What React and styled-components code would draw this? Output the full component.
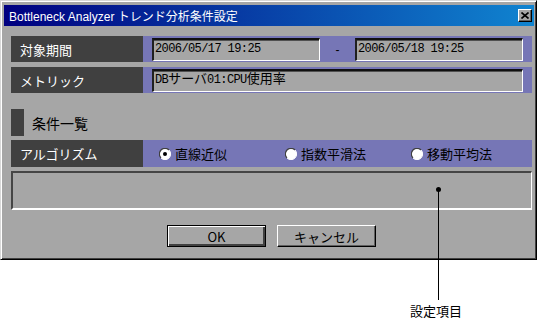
import React from 'react'
import styled, { createGlobalStyle } from 'styled-components'

const GlobalStyle = createGlobalStyle`
  body {
    margin: 0;
    background: #fff;
    font-family: "Noto Sans CJK JP", sans-serif;
  }
`

const FACE = '#a6a6a6'
const DARK = '#404040'
const PURPLE = '#7676b6'

const Page = styled.div`
  position: relative;
  width: 543px;
  height: 331px;
`

const Window = styled.div`
  width: 537px;
  height: 260px;
  box-sizing: border-box;
  background: ${FACE};
  border: 1px solid;
  border-color: #d8d8d8 #000 #000 #d8d8d8;
  box-shadow: inset 1px 1px #fff, inset -1px -1px ${DARK};
  padding: 4px 2px 0 3px;
  display: flex;
  flex-direction: column;
`

const TitleBar = styled.div`
  height: 21px;
  display: flex;
  align-items: center;
  justify-content: space-between;
  padding: 0 2px 0 5px;
  background: linear-gradient(to right, #000080, #1084d0);
  color: #fff;
  font: 12px "Liberation Sans", "Noto Sans CJK JP", sans-serif;
  white-space: nowrap;
`

const CloseButton = styled.div`
  width: 14px;
  height: 13px;
  box-sizing: border-box;
  background: ${FACE};
  border: 1px solid;
  border-color: #fff #000 #000 #fff;
  box-shadow: inset -1px -1px #606060;
  display: flex;
  align-items: center;
  justify-content: center;
`

const Content = styled.div`
  display: flex;
  flex-direction: column;
  padding: 10px 2px 0 7px;
`

const Row = styled.div`
  display: grid;
  grid-template-columns: 132px minmax(0, 1fr);
  height: ${p => p.$h || 26}px;
  margin-top: ${p => p.$mt || 0}px;
`

const Label = styled.div`
  background: ${DARK};
  color: #fff;
  font-size: 13px;
  display: flex;
  align-items: center;
  padding-left: 9px;
`

const Values = styled.div`
  background: ${PURPLE};
  display: flex;
  align-items: flex-start;
  padding: 2px 9px 0;
`

const Input = styled.div`
  flex: 1;
  height: 23px;
  box-sizing: border-box;
  background: ${FACE};
  border-style: solid;
  border-width: 2px 1px 1px 2px;
  border-color: #101010 #fff #fff #202020;
  box-shadow: inset 0 1px #505050;
  padding-left: 1px;
  font: 12px/19px "Liberation Mono", "Noto Sans CJK JP", monospace;
  letter-spacing: -0.6px;
  color: #000;
  white-space: nowrap;
  overflow: hidden;
`

const Wide = styled.span`
  font-family: "Noto Sans CJK JP", sans-serif;
  font-size: 13px;
  letter-spacing: 0;
  line-height: 1;
`

const Dash = styled.div`
  width: 35px;
  height: 23px;
  display: flex;
  align-items: center;
  justify-content: center;
  font: 12px "Liberation Sans", sans-serif;
`

const Section = styled.div`
  display: flex;
  align-items: center;
  gap: 8px;
  height: 27px;
  margin-top: 16px;
  font-size: 14px;
  color: #000;
`

const Marker = styled.div`
  width: 13px;
  height: 27px;
  background: ${DARK};
`

const Options = styled.div`
  background: ${PURPLE};
  display: flex;
  align-items: center;
  padding-left: 16px;
  overflow: hidden;
`

const Option = styled.div`
  flex: 0 0 126px;
  display: flex;
  align-items: center;
  gap: 4px;
  font-size: 13px;
  color: #000;
  white-space: nowrap;
`

const Box = styled.div`
  height: 39px;
  margin-top: 4px;
  box-sizing: border-box;
  border-style: solid;
  border-width: 2px 1px 2px 2px;
  border-color: #454545 #fff #fff #454545;
`

const ButtonRow = styled.div`
  display: flex;
  justify-content: center;
  gap: 11px;
  margin-top: 15px;
`

const Button = styled.div`
  width: 99px;
  height: 22px;
  box-sizing: border-box;
  background: ${FACE};
  display: flex;
  align-items: center;
  justify-content: center;
  font-size: 13px;
  color: #000;
  border: 1px solid;
  border-color: ${p => (p.$default ? '#000' : '#fff #000 #000 #fff')};
  box-shadow: ${p =>
    p.$default
      ? `inset 1px 1px #fff, inset -2px -2px ${DARK}`
      : 'inset -1px -1px #606060'};
`

const Dot = styled.div`
  position: absolute;
  left: 436px;
  top: 187px;
  width: 5px;
  height: 5px;
  border-radius: 50%;
  background: #000;
`

const Leader = styled.div`
  position: absolute;
  left: 438px;
  top: 189px;
  width: 1px;
  height: 111px;
  background: #000;
`

const Note = styled.div`
  position: absolute;
  left: 410px;
  top: 303px;
  font-size: 13px;
  line-height: 15px;
  color: #000;
`

function Radio({ checked }) {
  return (
    <svg width="12" height="12" viewBox="0 0 12 12">
      <circle cx="6" cy="6" r="5.5" fill="#fff" />
      <path d="M10 2 A5.5 5.5 0 0 0 2 10" stroke="#404040" strokeWidth="1.2" fill="none" />
      <path d="M2 10 A5.5 5.5 0 0 0 10 2" stroke="#fff" strokeWidth="1" fill="none" />
      {checked && <circle cx="6" cy="6" r="2" fill="#000" />}
    </svg>
  )
}

export default function App() {
  return (
    <Page>
      <GlobalStyle />
      <Window>
        <TitleBar>
          <span>Bottleneck Analyzer トレンド分析条件設定</span>
          <CloseButton>
            <svg width="8" height="7" viewBox="0 0 8 7">
              <path d="M0.5 0.5 L7.5 6.5 M7.5 0.5 L0.5 6.5" stroke="#000" strokeWidth="1.6" />
            </svg>
          </CloseButton>
        </TitleBar>
        <Content>
          <Row>
            <Label>対象期間</Label>
            <Values>
              <Input>2006/05/17 19:25</Input>
              <Dash>-</Dash>
              <Input>2006/05/18 19:25</Input>
            </Values>
          </Row>
          <Row $mt={5}>
            <Label>メトリック</Label>
            <Values>
              <Input>
                DB<Wide>サーバ</Wide>01:CPU<Wide>使用率</Wide>
              </Input>
            </Values>
          </Row>
          <Section>
            <Marker />
            <span>条件一覧</span>
          </Section>
          <Row $h={27} $mt={4}>
            <Label>アルゴリズム</Label>
            <Options>
              <Option><Radio checked />直線近似</Option>
              <Option><Radio />指数平滑法</Option>
              <Option><Radio />移動平均法</Option>
            </Options>
          </Row>
          <Box />
          <ButtonRow>
            <Button $default>OK</Button>
            <Button>キャンセル</Button>
          </ButtonRow>
        </Content>
      </Window>
      <Dot />
      <Leader />
      <Note>設定項目</Note>
    </Page>
  )
}
